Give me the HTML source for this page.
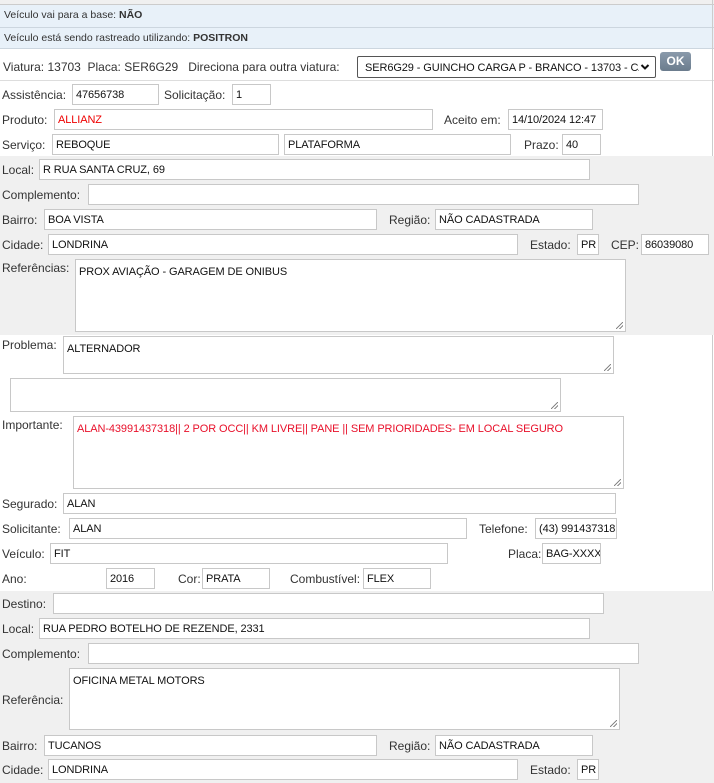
<!DOCTYPE html>
<html><head><meta charset="utf-8"><style>
*{box-sizing:border-box;margin:0;padding:0}
body{width:714px;height:783px;position:relative;background:#fff;font-family:"Liberation Sans",sans-serif;font-size:12px;color:#333;overflow:hidden}
.l{position:absolute;white-space:nowrap;line-height:14px}
.i{position:absolute;background:#fff;border:1px solid #c8c8c8;height:21px;padding:3px 3px;font-size:11px;letter-spacing:-0.1px;color:#111;white-space:nowrap;overflow:hidden;line-height:14px}
.t{position:absolute;background:#fff;border:1px solid #c8c8c8;padding:5px 3px;font-size:11px;letter-spacing:-0.1px;color:#111;line-height:14px}
.t:after{content:"";position:absolute;right:2px;bottom:2px;width:7px;height:7px;background:linear-gradient(135deg,transparent 45%,#888 45%,#888 55%,transparent 55%,transparent 70%,#888 70%,#888 80%,transparent 80%)}
.g{position:absolute;left:0;width:714px;background:#f0f0f0}
.b{position:absolute;left:0;width:714px;background:#e8f1f9;border-bottom:1px solid #ccd6df;font-size:10.5px;padding-left:4px;line-height:21px;color:#333}
</style></head><body>
<div style="position:absolute;left:0;top:0;width:714px;height:5px;background:#f0f0f0;border-bottom:1px solid #ccc"></div>
<div class="b" style="top:5px;height:23px">Veículo vai para a base: <b>NÃO</b></div>
<div class="b" style="top:28px;height:21px">Veículo está sendo rastreado utilizando: <b>POSITRON</b></div>
<div style="position:absolute;left:0;top:80px;width:714px;border-top:1px solid #ddd"></div>
<div style="position:absolute;right:1px;top:0;height:783px;border-right:1px solid #ccc"></div>
<div class="g" style="top:156px;height:179px"></div>
<div class="g" style="top:591px;height:192px"></div>

<div class="l" style="left:3px;top:60px">Viatura: 13703&nbsp; Placa: SER6G29 &nbsp; Direciona para outra viatura:</div>
<div class="i" style="left:357px;top:56px;width:299px;height:22px;border:1px solid #555;border-radius:2px;padding:4px 0 0 7px;font-size:11px"><div style="width:274px;overflow:hidden">SER6G29 - GUINCHO CARGA P - BRANCO - 13703 - CAI</div></div>
<svg style="position:absolute;left:640px;top:63px" width="10" height="8" viewBox="0 0 10 8"><path d="M1.5 2 L5 5.5 L8.5 2" fill="none" stroke="#111" stroke-width="2"/></svg>
<div style="position:absolute;left:660px;top:52px;width:31px;height:19px;background:linear-gradient(#8a9aab,#6b7c8d);border-radius:3px;color:#fff;font-weight:bold;font-size:12px;text-align:center;line-height:19px">OK</div>

<div class="l" style="left:2px;top:88px">Assistência:</div><div class="i" style="left:72px;top:84px;width:87px">47656738</div>
<div class="l" style="left:164px;top:88px">Solicitação:</div><div class="i" style="left:232px;top:84px;width:39px">1</div>
<div class="l" style="left:2px;top:113px">Produto:</div><div class="i" style="left:54px;top:109px;width:379px;color:#e00">ALLIANZ</div>
<div class="l" style="left:444px;top:113px">Aceito em:</div><div class="i" style="left:508px;top:109px;width:95px">14/10/2024 12:47</div>
<div class="l" style="left:2px;top:138px">Serviço:</div><div class="i" style="left:52px;top:134px;width:227px">REBOQUE</div>
<div class="i" style="left:284px;top:134px;width:227px">PLATAFORMA</div>
<div class="l" style="left:524px;top:138px">Prazo:</div><div class="i" style="left:562px;top:134px;width:39px">40</div>

<div class="l" style="left:2px;top:163px">Local:</div><div class="i" style="left:39px;top:159px;width:551px">R RUA SANTA CRUZ, 69</div>
<div class="l" style="left:2px;top:188px">Complemento:</div><div class="i" style="left:88px;top:184px;width:551px"></div>
<div class="l" style="left:2px;top:213px">Bairro:</div><div class="i" style="left:44px;top:209px;width:333px">BOA VISTA</div>
<div class="l" style="left:389px;top:213px">Região:</div><div class="i" style="left:435px;top:209px;width:158px">NÃO CADASTRADA</div>
<div class="l" style="left:2px;top:238px">Cidade:</div><div class="i" style="left:48px;top:234px;width:470px">LONDRINA</div>
<div class="l" style="left:530px;top:238px">Estado:</div><div class="i" style="left:577px;top:234px;width:22px">PR</div>
<div class="l" style="left:611px;top:238px">CEP:</div><div class="i" style="left:641px;top:234px;width:68px">86039080</div>
<div class="l" style="left:2px;top:261px">Referências:</div><div class="t" style="left:75px;top:259px;width:551px;height:73px">PROX AVIAÇÃO - GARAGEM DE ONIBUS</div>

<div class="l" style="left:2px;top:338px">Problema:</div><div class="t" style="left:63px;top:336px;width:551px;height:38px">ALTERNADOR</div>
<div class="t" style="left:10px;top:378px;width:551px;height:34px"></div>
<div class="l" style="left:2px;top:418px">Importante:</div><div class="t" style="left:73px;top:416px;width:551px;height:73px;color:#e8102a">ALAN-43991437318|| 2 POR OCC|| KM LIVRE|| PANE || SEM PRIORIDADES- EM LOCAL SEGURO</div>
<div class="l" style="left:2px;top:497px">Segurado:</div><div class="i" style="left:63px;top:493px;width:553px">ALAN</div>
<div class="l" style="left:2px;top:522px">Solicitante:</div><div class="i" style="left:69px;top:518px;width:398px">ALAN</div>
<div class="l" style="left:479px;top:522px">Telefone:</div><div class="i" style="left:535px;top:518px;width:82px">(43) 991437318</div>
<div class="l" style="left:2px;top:547px">Veículo:</div><div class="i" style="left:50px;top:543px;width:398px">FIT</div>
<div class="l" style="left:508px;top:547px">Placa:</div><div class="i" style="left:542px;top:543px;width:59px">BAG-XXXX</div>
<div class="l" style="left:2px;top:572px">Ano:</div><div class="i" style="left:106px;top:568px;width:49px">2016</div>
<div class="l" style="left:178px;top:572px">Cor:</div><div class="i" style="left:202px;top:568px;width:68px">PRATA</div>
<div class="l" style="left:290px;top:572px">Combustível:</div><div class="i" style="left:363px;top:568px;width:68px">FLEX</div>

<div class="l" style="left:2px;top:597px">Destino:</div><div class="i" style="left:53px;top:593px;width:551px"></div>
<div class="l" style="left:2px;top:622px">Local:</div><div class="i" style="left:39px;top:618px;width:551px">RUA PEDRO BOTELHO DE REZENDE, 2331</div>
<div class="l" style="left:2px;top:647px">Complemento:</div><div class="i" style="left:88px;top:643px;width:551px"></div>
<div class="l" style="left:2px;top:693px">Referência:</div><div class="t" style="left:69px;top:668px;width:551px;height:62px">OFICINA METAL MOTORS</div>
<div class="l" style="left:2px;top:739px">Bairro:</div><div class="i" style="left:44px;top:735px;width:333px">TUCANOS</div>
<div class="l" style="left:389px;top:739px">Região:</div><div class="i" style="left:435px;top:735px;width:158px">NÃO CADASTRADA</div>
<div class="l" style="left:2px;top:763px">Cidade:</div><div class="i" style="left:48px;top:759px;width:470px">LONDRINA</div>
<div class="l" style="left:530px;top:763px">Estado:</div><div class="i" style="left:577px;top:759px;width:22px">PR</div>
</body></html>
